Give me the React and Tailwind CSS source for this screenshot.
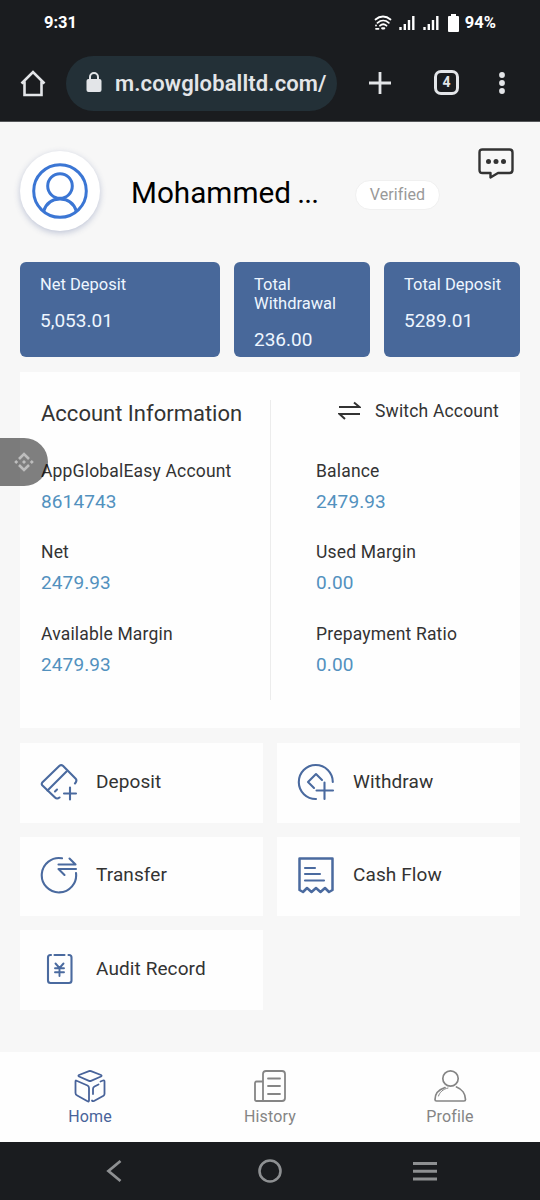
const SUMMARY = [
  { label: 'Net Deposit', value: '5,053.01', width: 'w-[200px]' },
  { label: 'Total Withdrawal', value: '236.00', width: 'w-[136px]' },
  { label: 'Total Deposit', value: '5289.01', width: 'w-[136px]' },
]

const LEFT_FIELDS = [
  { label: 'AppGlobalEasy Account', value: '8614743' },
  { label: 'Net', value: '2479.93' },
  { label: 'Available Margin', value: '2479.93' },
]

const RIGHT_FIELDS = [
  { label: 'Balance', value: '2479.93' },
  { label: 'Used Margin', value: '0.00' },
  { label: 'Prepayment Ratio', value: '0.00' },
]

const ACTIONS = [
  { label: 'Deposit', Icon: DepositIcon },
  { label: 'Withdraw', Icon: WithdrawIcon },
  { label: 'Transfer', Icon: TransferIcon },
  { label: 'Cash Flow', Icon: CashFlowIcon },
  { label: 'Audit Record', Icon: AuditIcon },
]

const TABS = [
  { label: 'Home', Icon: CubeIcon, active: true },
  { label: 'History', Icon: NewsIcon },
  { label: 'Profile', Icon: PersonIcon },
]

export default function App() {
  return (
    <div className="relative flex h-[1200px] w-[540px] flex-col overflow-hidden bg-[#f7f7f7] font-[Roboto,sans-serif] text-[#333]">
      <StatusBar />
      <BrowserBar />
      <main className="flex-1 px-5">
        <ProfileHeader />
        <SummaryCards />
        <AccountPanel />
        <div className="mt-[15px] grid grid-cols-2 gap-x-[14px] gap-y-[14px]">
          {ACTIONS.map(({ label, Icon }) => (
            <button key={label} className="flex h-[79.5px] items-center bg-[#fefefe] pb-[2px] pl-5 text-left">
              <Icon />
              <span className="ml-[18px] text-[19px] tracking-[0.1px]">{label}</span>
            </button>
          ))}
        </div>
      </main>
      <TabBar />
      <SystemNav />
      <FloatingHandle />
    </div>
  )
}

function StatusBar() {
  return (
    <div className="flex h-[45px] shrink-0 items-center justify-between bg-[#1a1c1f] pl-11 pr-[44px] pt-[2px] text-[16.5px] font-bold text-white">
      <span>9:31</span>
      <div className="flex items-center">
        <svg className="-mt-[2px]" width="18" height="16" viewBox="0 0 18 16" fill="none" stroke="#fff" strokeWidth="1.8" strokeLinecap="round">
          <path d="M1.5 4.5c4.5-4 10.5-4 15 0M3.5 7.8c3.4-3 8-3 11.3 0M6 10.7c2-1.8 4.5-1.8 6.5 0" />
          <path d="M8.2 13.3h2" strokeWidth="2.2" />
          <path d="M2 10.5v.1M2 13.800h2.500" />
        </svg>
        <Signal className="-mt-[2px] ml-[7px]" />
        <Signal className="-mt-[2px] ml-2" />
        <svg className="-mt-[2px] ml-[9px]" width="11" height="18" viewBox="0 0 11 18" fill="#fff">
          <path d="M3 0h5v2h2q1 0 1 1v14q0 1-1 1H1q-1 0-1-1V3q0-1 1-1h2z" />
        </svg>
        <span className="ml-[6px]">94%</span>
      </div>
    </div>
  )
}

function Signal({ className }) {
  return (
    <svg className={className} width="16" height="15" viewBox="0 0 16 15" fill="none" stroke="#fff" strokeWidth="2.4">
      <path d="M1.5 15v-3M5.800 15V9M10 15V5M14.300 15V1" />
    </svg>
  )
}

function BrowserBar() {
  return (
    <div className="flex h-[77px] shrink-0 items-center border-b border-[#55575a] bg-[#1a1c1f] text-[#e3e5e8]">
      <svg className="-mt-px ml-5" width="26" height="28" viewBox="0 0 26 28" fill="none" stroke="currentColor" strokeWidth="2.600">
        <path d="M1.500 14.500 13 3l11.500 11.500M4.500 12.500V26h17V12.500" />
      </svg>
      <div className="ml-5 flex h-[55px] w-[271px] items-center rounded-full bg-[#233037] pl-5">
        <svg className="-mt-[2px]" width="16" height="20" viewBox="0 0 16 20">
          <path d="M4 8V5a4 4 0 0 1 8 0v3" fill="none" stroke="currentColor" strokeWidth="2" />
          <rect x="0.500" y="7" width="15" height="13" rx="2" fill="currentColor" />
        </svg>
        <span className="ml-[13px] text-[22px] font-semibold tracking-[0.120px]">m.cowgloballtd.com/</span>
      </div>
      <svg className="ml-8" width="22" height="22" viewBox="0 0 22 22" stroke="currentColor" strokeWidth="2.800">
        <path d="M0 11h22M11 0v22" />
      </svg>
      <div className="-mt-px ml-[43px] flex size-[25px] items-center justify-center rounded-[7px] border-[3px] border-current text-[14px] font-bold">
        4
      </div>
      <svg className="ml-[39px]" width="8" height="24" viewBox="0 0 8 24" fill="currentColor">
        <circle cx="4" cy="4" r="2.900" />
        <circle cx="4" cy="12" r="2.900" />
        <circle cx="4" cy="20" r="2.900" />
      </svg>
    </div>
  )
}

function ProfileHeader() {
  return (
    <header className="flex h-[140px] pt-[29px]">
      <div className="flex size-20 items-center justify-center rounded-full bg-white shadow-[0_2px_6px_rgba(60,80,140,0.3)]">
        <svg width="56" height="56" viewBox="0 0 56 56" fill="none" stroke="#3b76d4" strokeWidth="3">
          <circle cx="28" cy="28" r="26.300" />
          <circle cx="28" cy="23" r="12.300" />
          <path d="M11.500 48.500c2.500-8 8.500-12.500 16.500-12.500s14 4.500 16.500 12.500" />
        </svg>
      </div>
      <h1 className="ml-[31px] mt-[22px] w-[224px] whitespace-nowrap text-[29.700px] leading-10 text-black">Mohammed <span className="-ml-px tracking-[-0.900px]">...</span></h1>
      <span className="mt-[29px] flex h-[30px] w-[85px] items-center justify-center rounded-full border border-[#f0f0f0] bg-white pb-px text-[16px] tracking-[0.100px] text-[#999]">
        Verified
      </span>
      <svg className="-mt-[3px] ml-[38px]" width="36" height="32" viewBox="0 0 36 32" fill="none" stroke="#333" strokeWidth="2.400" strokeLinejoin="round">
        <path d="M4.500 1.500h27q3 0 3 3v17.500q0 3-3 3H20l-7.500 4.500V25h-8q-3 0-3-3V4.500q0-3 3-3z" />
        <g fill="#333" stroke="none">
          <circle cx="10.500" cy="13.500" r="2.500" />
          <circle cx="18" cy="13.500" r="2.500" />
          <circle cx="25.500" cy="13.500" r="2.500" />
        </g>
      </svg>
    </header>
  )
}

function SummaryCards() {
  return (
    <section className="flex justify-between">
      {SUMMARY.map(({ label, value, width }) => (
        <div key={label} className={`h-[95px] rounded-md bg-[#48689a] pl-5 pt-[13px] text-[#eef6ff] ${width}`}>
          <p className="text-[16.500px] leading-[19px]">{label}</p>
          <p className="mt-[15px] text-[19px] leading-[24px]">{value}</p>
        </div>
      ))}
    </section>
  )
}

function AccountPanel() {
  return (
    <section className="mt-[15px] flex h-[356px] bg-[#fefefe] pt-7">
      <div className="h-[300px] w-[251px] border-r border-[#ececec] pl-[21px]">
        <h2 className="h-[57px] whitespace-nowrap text-[22px] leading-7">Account Information</h2>
        <FieldList fields={LEFT_FIELDS} />
      </div>
      <div className="flex-1 pl-[45px]">
        <div className="flex h-[57px] items-start pl-[22px]">
          <svg className="mt-px" width="23" height="20" viewBox="0 0 23 20" fill="none" stroke="#333" strokeWidth="2">
            <path d="M1 6h20.500L16 1.500M22 13H1.500L7 18" />
          </svg>
          <span className="ml-[14px] whitespace-nowrap text-[17.500px] leading-[22px] tracking-[0.180px]">Switch Account</span>
        </div>
        <FieldList fields={RIGHT_FIELDS} />
      </div>
    </section>
  )
}

function FieldList({ fields }) {
  return (
    <dl>
      {fields.map(({ label, value }) => (
        <div key={label} className="h-[81.400px]">
          <dt className="whitespace-nowrap text-[17.500px] leading-7 tracking-[0.180px]">{label}</dt>
          <dd className="mt-[3px] text-[19px] leading-7 tracking-[0.120px] text-[#5291be]">{value}</dd>
        </div>
      ))}
    </dl>
  )
}

function TabBar() {
  return (
    <nav className="grid h-[90px] shrink-0 grid-cols-3 bg-[#fefefe]">
      {TABS.map(({ label, Icon, active }) => (
        <a key={label} className={`flex flex-col items-center pt-[17px] ${active ? 'text-[#48639a]' : 'text-[#858585]'}`}>
          <Icon />
          <span className="mt-1 text-[16px] leading-5 tracking-[0.150px]">{label}</span>
        </a>
      ))}
    </nav>
  )
}

function SystemNav() {
  return (
    <div className="grid h-[58px] shrink-0 grid-cols-[228px_84px_226px] items-center justify-items-center bg-[#1a1c1f] text-[#8e9092]">
      <svg width="16" height="24" viewBox="0 0 16 24" fill="none" stroke="currentColor" strokeWidth="2.800">
        <path d="M14.500 2 2.500 12l12 10" />
      </svg>
      <svg width="24" height="24" viewBox="0 0 24 24" fill="none" stroke="currentColor" strokeWidth="2.600">
        <circle cx="12" cy="12" r="10.500" />
      </svg>
      <svg width="24" height="20" viewBox="0 0 24 20" stroke="currentColor" strokeWidth="3">
        <path d="M0 2.500h24M0 10.300h24M0 18h24" />
      </svg>
    </div>
  )
}

// Draggable handle stuck to the left edge of the screen
function FloatingHandle() {
  return (
    <div className="absolute left-0 top-[438px] flex h-12 w-12 items-center rounded-r-full bg-black/50 pl-[14px]">
      <svg className="-mt-px" width="20" height="20" viewBox="0 0 20 20" fill="none" stroke="#bdbdbd" strokeWidth="2.600">
        <path d="M5 7l5-5 5 5M5 13l5 5 5-5" />
        <path d="M10 8l2 2-2 2-2-2zM2.200 8l2 2-2 2-2-2zM17.800 8l2 2-2 2-2-2z" fill="#bdbdbd" stroke="none" />
      </svg>
    </div>
  )
}

function ActionIcon({ children }) {
  return (
    <svg className="shrink-0" width="38" height="38" viewBox="0 0 38 38" fill="none" stroke="#4a6a9f" strokeWidth="2.100" strokeLinecap="round" strokeLinejoin="round">
      {children}
    </svg>
  )
}

function DepositIcon() {
  return (
    <ActionIcon>
      <path d="M19.500 34.500q-2.500 2-4.500 0L2.500 22.500q-1.500-1.500 0-3.300L19.500 2.800q1.700-1.500 3.400 0L35.500 15.500q2 2-.5 5" />
      <path d="M7.500 27.500 26.500 8.500M15 28.500l2-2" />
      <path d="M30 24.500v12M24 30.500h12" />
    </ActionIcon>
  )
}

function WithdrawIcon() {
  return (
    <ActionIcon>
      <path d="M35.800 19A17 17 0 1 0 19 36" />
      <path d="M17 25 11 19l8-8 6 6" />
      <path d="M27.500 19.500v16.500M19.500 27.500h16.500" />
    </ActionIcon>
  )
}

function TransferIcon() {
  return (
    <ActionIcon>
      <path d="M22 2.300A17.200 17.200 0 1 0 36 17" />
      <path d="M18.500 8.500h17l-6-6M36 13H18.500l6 6" />
    </ActionIcon>
  )
}

function CashFlowIcon() {
  return (
    <ActionIcon>
      <path
        d="M2.500 2.500h33V34l-3.500 2-4-4-4.500 4-4.500-4-4.500 4-4.500-4-4 4-3.500-2z"
        strokeWidth="2.500"
      />
      <path d="M8 12h10M8 18h15M8 24.500h19" />
    </ActionIcon>
  )
}

function AuditIcon() {
  return (
    <ActionIcon>
      <path d="M11 5H10.500Q8 5 8 7.500v23Q8 33 10.500 33h18.500q2.500 0 2.500-2.500v-23Q31.500 5 29 5h-.5M14.500 5h10" />
      <path d="M15.500 13.500l4 4.500 4-4.500M19.500 18v8M15 18.300h9M15 22.300h9" strokeWidth="1.900" />
    </ActionIcon>
  )
}

function CubeIcon() {
  return (
    <svg width="34" height="34" viewBox="0 0 34 34" fill="none" stroke="currentColor" strokeWidth="1.800" strokeLinecap="round" strokeLinejoin="round">
      <path d="M16 2.200q1-.4 2 0l10 3.800q1.200.7 0 1.500l-10 4.300q-1 .4-2 0L6 7.500q-1.200-.8 0-1.500z" />
      <path d="M3 11.500 14.500 16.500q1.500.8 1.500 2.500v12.500q0 1.500-1.500.8L4.200 26.500Q2.500 25.700 2.500 24V12.500q0-1 .5-1z" />
      <path d="M27.500 12.500l2.500-1q1.500-.5 1.500 1V25q0 1-1 1.700L21 32q-1.500.5-2-.5M20 25v-5q0-1.700 1.500-2.500l4-2" />
    </svg>
  )
}

function NewsIcon() {
  return (
    <svg width="34" height="34" viewBox="0 0 34 34" fill="none" stroke="currentColor" strokeWidth="1.800" strokeLinecap="round" strokeLinejoin="round">
      <path d="M13 2h16q3 0 3 3v24q0 3-3 3H3.500Q2 32 2 30.500V14q0-1.500 1.500-1.500H10V5q0-3 3-3zM10 12.500V32" />
      <path d="M15 9.500h12M15 17h12M15 25h12" />
    </svg>
  )
}

function PersonIcon() {
  return (
    <svg width="34" height="34" viewBox="0 0 34 34" fill="none" stroke="currentColor" strokeWidth="1.700" strokeLinecap="round" strokeLinejoin="round">
      <circle cx="17.500" cy="9.500" r="7.700" />
      <path d="M12 18.500C6 20.500 2 25 2 30.500q0 1.500 1.500 1.500h27.500q1.500 0 1.500-1.500c0-5.500-3.500-10.500-9-12.500" />
      <path d="M5.500 27c1-3.500 4.500-7 9.500-8" strokeWidth="1" />
    </svg>
  )
}
